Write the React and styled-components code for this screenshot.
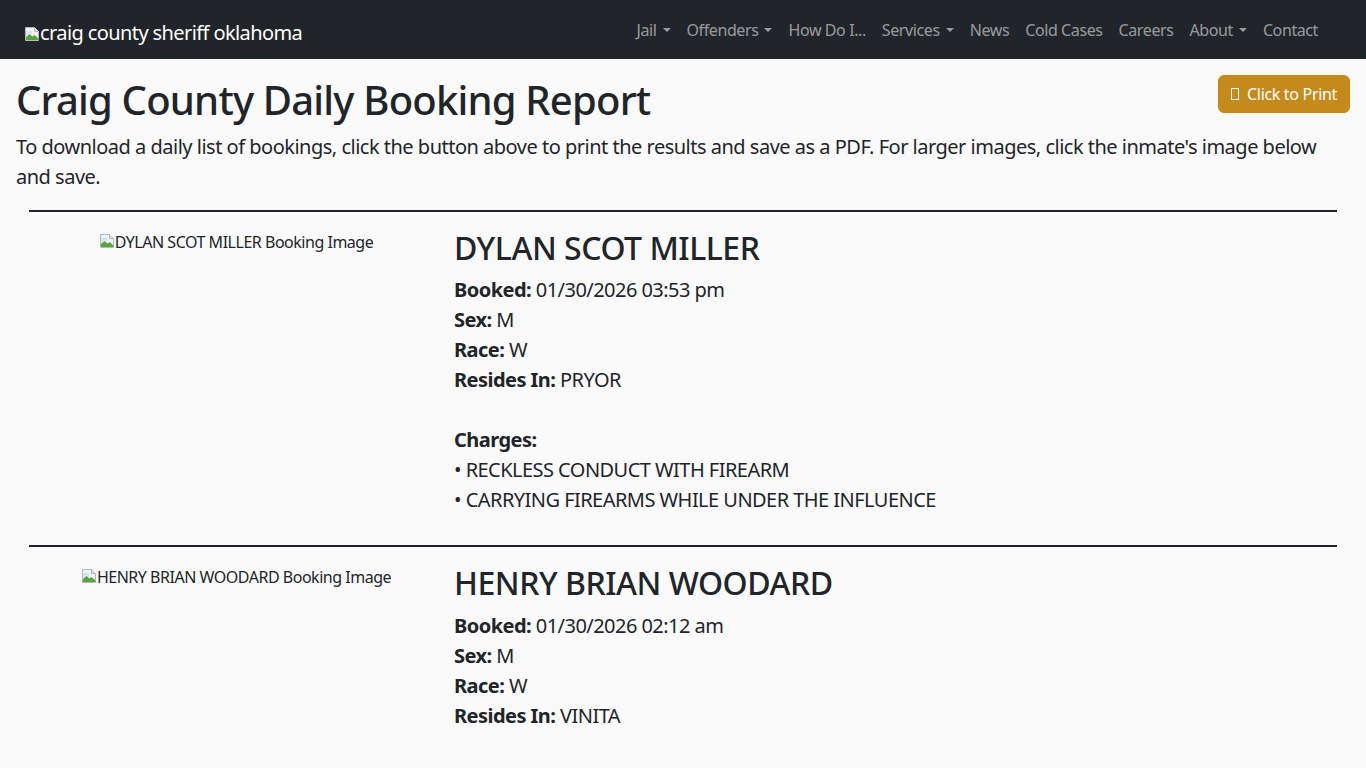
import React from "react";
import styled, { createGlobalStyle } from "styled-components";

const Global = createGlobalStyle`
  html, body { margin: 0; padding: 0; }
  body {
    background: #fafafa;
    color: #212529;
    font-family: "Noto Sans", "Open Sans", sans-serif;
  }
  * { box-sizing: border-box; }
`;

const Navbar = styled.nav`
  height: 59px;
  background: #212529;
  display: flex;
  align-items: center;
  justify-content: space-between;
  padding: 0 40px 0 24px;
`;

const Brand = styled.a`
  display: flex;
  align-items: center;
  color: #fff;
  font-size: 20px;
  letter-spacing: -0.03em;
  text-decoration: none;
  margin-top: 5px;
`;

const NavList = styled.ul`
  display: flex;
  list-style: none;
  margin: 0;
  padding: 0;
`;

const NavLink = styled.a`
  display: flex;
  align-items: center;
  padding: 8px;
  color: rgba(255, 255, 255, 0.55);
  font-size: 16px;
  letter-spacing: -0.025em;
  text-decoration: none;
`;

const Caret = styled.span`
  display: inline-block;
  margin-left: 6px;
  width: 0;
  height: 0;
  border-top: 4px solid currentColor;
  border-left: 4px solid transparent;
  border-right: 4px solid transparent;
`;

const Main = styled.main`
  padding: 16px 16px 0;
`;

const Header = styled.div`
  display: flex;
  justify-content: space-between;
  align-items: flex-start;
`;

const Title = styled.h1`
  margin: 1px 0 8px;
  font-size: 40px;
  font-weight: 500;
  line-height: 1.2;
  letter-spacing: -0.02em;
`;

const PrintButton = styled.button`
  display: flex;
  align-items: center;
  gap: 6px;
  height: 38px;
  padding: 0 12px;
  border: 1px solid #c48a1c;
  border-radius: 6px;
  background: #c48a1c;
  color: #fff;
  font-family: inherit;
  font-size: 16px;
  letter-spacing: -0.02em;
  cursor: pointer;
`;

const Tofu = styled.span`
  display: inline-block;
  width: 8px;
  height: 12px;
  border: 1px solid #fff;
  margin-right: 2px;
`;

const Intro = styled.p`
  margin: 0 0 18px;
  font-size: 20px;
  line-height: 30px;
  letter-spacing: -0.025em;
`;

const Entries = styled.div`
  padding: 0 13px;
`;

const Entry = styled.section`
  border-top: 2px solid #212529;
  display: grid;
  grid-template-columns: 414px 1fr;
  column-gap: 11px;
  padding: 17px 0 30px;
`;

const ImageCol = styled.div`
  display: flex;
  justify-content: center;
  padding-top: 1px;
`;

const BrokenImage = styled.span`
  display: inline-flex;
  align-items: flex-start;
  font-size: 16px;
  line-height: 24px;
  letter-spacing: -0.03em;
  color: #212529;
`;

const Details = styled.div`
  font-size: 20px;
  line-height: 30px;
  letter-spacing: -0.027em;
`;

const Name = styled.h2`
  margin: 0 0 8px;
  font-size: 32px;
  font-weight: 500;
  line-height: 1.2;
  letter-spacing: -0.015em;
`;

const Line = styled.div`
  min-height: 30px;
`;

const Label = styled.b`
  font-weight: 700;
`;

function BrokenIcon({ size = 16 }) {
  return (
    <svg width={size} height={size} viewBox="0 0 16 16" style={{ flexShrink: 0, marginTop: 3 }}>
      <path d="M1.5 1.5h9l4 4v9h-13z" fill="#f2f2f2" stroke="#b8b8b8" />
      <path d="M10.5 1.5v4h4" fill="#e0e0e0" stroke="#b8b8b8" />
      <path d="M2 11l3.5-3 3 2.5 2-1.5 4 3.5V14H2z" fill="#5aa33c" />
      <path d="M2 5h6v4l-2.5-1.8L2 10z" fill="#cfe3f3" />
    </svg>
  );
}

const navItems = [
  { label: "Jail", drop: true },
  { label: "Offenders", drop: true },
  { label: "How Do I..." },
  { label: "Services", drop: true },
  { label: "News" },
  { label: "Cold Cases" },
  { label: "Careers" },
  { label: "About", drop: true },
  { label: "Contact" },
];

const bookings = [
  {
    name: "DYLAN SCOT MILLER",
    booked: "01/30/2026 03:53 pm",
    sex: "M",
    race: "W",
    resides: "PRYOR",
    charges: ["RECKLESS CONDUCT WITH FIREARM", "CARRYING FIREARMS WHILE UNDER THE INFLUENCE"],
  },
  {
    name: "HENRY BRIAN WOODARD",
    booked: "01/30/2026 02:12 am",
    sex: "M",
    race: "W",
    resides: "VINITA",
    charges: [],
  },
];

export default function App() {
  return (
    <>
      <Global />
      <Navbar>
        <Brand href="#">
          <BrokenIcon />
          <span>craig county sheriff oklahoma</span>
        </Brand>
        <NavList>
          {navItems.map((n) => (
            <li key={n.label}>
              <NavLink href="#">
                {n.label}
                {n.drop && <Caret />}
              </NavLink>
            </li>
          ))}
        </NavList>
      </Navbar>
      <Main>
        <Header>
          <Title>Craig County Daily Booking Report</Title>
          <PrintButton>
            <Tofu />
            Click to Print
          </PrintButton>
        </Header>
        <Intro>
          To download a daily list of bookings, click the button above to print the results and save as a PDF. For
          larger images, click the inmate's image below and save.
        </Intro>
        <Entries>
          {bookings.map((b) => (
            <Entry key={b.name}>
              <ImageCol>
                <BrokenImage>
                  <BrokenIcon />
                  {b.name} Booking Image
                </BrokenImage>
              </ImageCol>
              <Details>
                <Name>{b.name}</Name>
                <Line>
                  <Label>Booked:</Label> {b.booked}
                </Line>
                <Line>
                  <Label>Sex:</Label> {b.sex}
                </Line>
                <Line>
                  <Label>Race:</Label> {b.race}
                </Line>
                <Line>
                  <Label>Resides In:</Label> {b.resides}
                </Line>
                {b.charges.length > 0 && (
                  <>
                    <Line />
                    <Line>
                      <Label>Charges:</Label>
                    </Line>
                    {b.charges.map((c) => (
                      <Line key={c}>• {c}</Line>
                    ))}
                  </>
                )}
              </Details>
            </Entry>
          ))}
        </Entries>
      </Main>
    </>
  );
}
